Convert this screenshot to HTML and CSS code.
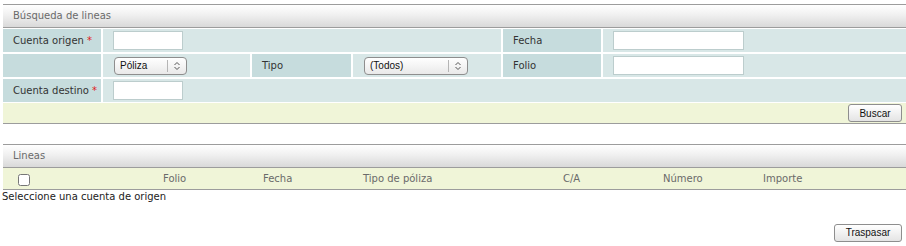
FILE: index.html
```html
<!DOCTYPE html>
<html lang="es">
<head>
    <meta charset="UTF-8">
    <title>Traspaso de lineas</title>
    <link rel="stylesheet" href="styles.css">
</head>
<body>
    <!-- busqueda -->
    <div class="panel">
        <div class="panel-title">Búsqueda de lineas</div>
        <div class="search">
            <div class="lbl">Cuenta origen <span class="req">*</span></div>
            <div class="val span-3"><input type="text" class="txt-short"></div>
            <div class="lbl">Fecha</div>
            <div class="val"><input type="text" class="txt-long"></div>

            <div class="lbl"></div>
            <div class="val">
                <span class="select">
                    <select class="sel-poliza"><option>Póliza</option></select>
                    <svg class="select-arrow" width="20" height="18" viewBox="0 0 20 18"><line x1="0.5" y1="3" x2="0.5" y2="15" stroke="#b5b5b5"/><path d="M7.5 8 L10 5.5 L12.5 8" fill="none" stroke="#555" stroke-width="1"/><path d="M7.5 10 L10 12.5 L12.5 10" fill="none" stroke="#555" stroke-width="1"/></svg>
                </span>
            </div>
            <div class="lbl">Tipo</div>
            <div class="val">
                <span class="select">
                    <select class="sel-tipo"><option>(Todos)</option></select>
                    <svg class="select-arrow" width="20" height="18" viewBox="0 0 20 18"><line x1="0.5" y1="3" x2="0.5" y2="15" stroke="#b5b5b5"/><path d="M7.5 8 L10 5.5 L12.5 8" fill="none" stroke="#555" stroke-width="1"/><path d="M7.5 10 L10 12.5 L12.5 10" fill="none" stroke="#555" stroke-width="1"/></svg>
                </span>
            </div>
            <div class="lbl">Folio</div>
            <div class="val"><input type="text" class="txt-long"></div>

            <div class="lbl">Cuenta destino <span class="req">*</span></div>
            <div class="val span-5"><input type="text" class="txt-short"></div>
        </div>
        <div class="panel-foot"><button class="btn btn-buscar">Buscar</button></div>
    </div>

    <!-- lineas -->
    <div class="panel panel-lineas">
        <div class="panel-title">Lineas</div>
        <table class="grid">
            <colgroup>
                <col style="width:150px">
                <col style="width:100px">
                <col style="width:100px">
                <col style="width:200px">
                <col style="width:100px">
                <col style="width:100px">
                <col>
            </colgroup>
            <thead>
                <tr>
                    <th class="chk"><input type="checkbox"></th>
                    <th>Folio</th>
                    <th>Fecha</th>
                    <th>Tipo de póliza</th>
                    <th>C/A</th>
                    <th>Número</th>
                    <th>Importe</th>
                </tr>
            </thead>
        </table>
        <div class="empty">Seleccione una cuenta de origen</div>
    </div>
    <div class="actions"><button class="btn btn-traspasar">Traspasar</button></div>
</body>
</html>
```

FILE: styles.css
```css
* {
    margin: 0;
    padding: 0;
    box-sizing: border-box;
}
body {
    padding: 4px 0 0 3px;
    font-family: "DejaVu Sans", Verdana, sans-serif;
    font-size: 10px;
    color: #333;
    background: #fff;
}
.panel {
    border-top: 1px solid #9c9c9c;
}
.panel-title {
    height: 23px;
    line-height: 22px;
    padding-left: 10px;
    color: #6a6a6a;
    background: linear-gradient(#ffffff, #f2f2f2 40%, #d9d9d9);
    border-bottom: 1px solid #9c9c9c;
}
.search {
    display: grid;
    grid-template-columns: 98px 147px 99px 148px 98px 1fr;
    grid-auto-rows: 23px;
    gap: 2px;
    margin-top: 1px;
}
.lbl {
    background-color: #c6dcdd;
    padding-left: 10px;
    line-height: 23px;
    color: #333;
}
.val {
    background-color: #d8e7e7;
    padding-left: 10px;
    display: flex;
    align-items: center;
}
.span-3 {
    grid-column: span 3;
}
.span-5 {
    grid-column: span 5;
}
.req {
    color: #e02020;
}
input[type="text"] {
    height: 19px;
    border: 1px solid #bccdcd;
    background: #fff;
}
.txt-short {
    width: 70px;
}
.txt-long {
    width: 131px;
}
.select {
    position: relative;
    display: inline-block;
    margin-left: 1px;
    height: 18px;
}
.select select {
    appearance: none;
    -webkit-appearance: none;
    height: 18px;
    padding-left: 5px;
    border: 1px solid #8e8e8e;
    border-radius: 4px;
    background: linear-gradient(#ffffff, #e9e9e9);
    font-family: "Liberation Sans", Arial, sans-serif;
    font-size: 10px;
    color: #111;
}
.sel-poliza {
    width: 73px;
}
.sel-tipo {
    width: 104px;
}
.select-arrow {
    position: absolute;
    right: 0;
    top: 0;
    pointer-events: none;
}
.panel-foot {
    margin-top: 1px;
    height: 21px;
    padding: 1px 4px 0 0;
    background-color: #f0f5d8;
    border-bottom: 1px solid #9c9c9c;
    text-align: right;
}
.btn {
    height: 18px;
    border: 1px solid #8e8e8e;
    border-radius: 3px;
    background: linear-gradient(#ffffff, #e4e4e4);
    font-family: "Liberation Sans", Arial, sans-serif;
    font-size: 10px;
    color: #111;
}
.btn-buscar {
    width: 54px;
}
.btn-traspasar {
    width: 68px;
}
.panel-lineas {
    margin-top: 20px;
}
.grid {
    width: 100%;
    table-layout: fixed;
    border-collapse: collapse;
}
.grid th {
    height: 21px;
    background-color: #f0f5d8;
    border-bottom: 1px solid #9c9c9c;
    font-weight: normal;
    color: #6a6a6a;
    text-align: left;
    padding: 0 0 0 10px;
}
.grid th.chk {
    padding-left: 11px;
}
.grid input[type="checkbox"] {
    margin: 5px 0 0 4px;
    width: 12px;
    height: 12px;
}
.empty {
    color: #222;
    padding-top: 1px;
    margin-left: -1px;
}
.actions {
    margin-top: 22px;
    padding-right: 4px;
    text-align: right;
}
```
